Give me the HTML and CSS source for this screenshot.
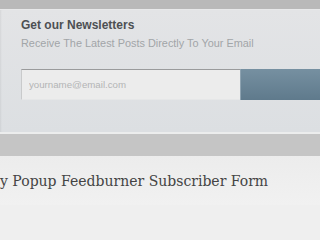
FILE: index.html
```html
<!DOCTYPE html>
<html lang="en">
<head>
<meta charset="utf-8">
<title>Newsletter popup</title>
<link rel="stylesheet" href="styles.css">
</head>
<body>
<div class="topbar"></div>
<section class="panel">
  <h2 class="title">Get our Newsletters</h2>
  <p class="subtitle">Receive The Latest Posts Directly To Your Email</p>
  <form class="form">
    <input class="email" type="text" placeholder="yourname@email.com">
    <button class="submit" type="button" aria-label="Subscribe"></button>
  </form>
</section>
<div class="band"></div>
<div class="caption">
  <p class="caption-text">y Popup Feedburner Subscriber Form</p>
</div>
</body>
</html>
```

FILE: styles.css
```css
html, body {
  margin: 0;
  padding: 0;
  overflow: hidden;
  background: #efefef;
}

.topbar {
  height: 9px;
  background: #b9b9b9;
}

.panel {
  height: 122px;
  border-top: 1px solid #e8e9ea;
  border-bottom: 2px solid #eceded;
  background: linear-gradient(to bottom, #e3e4e6 0%, #dcdfe2 100%);
  padding-left: 21px;
  overflow: hidden;
  display: flex;
  flex-direction: column;
  box-shadow: inset 2px 0 2px -1px rgba(0,0,0,0.06);
}

.title {
  margin: 8px 0 0;
  font-family: "Liberation Sans", Arial, sans-serif;
  font-weight: bold;
  font-size: 12px;
  line-height: 14px;
  color: #4d5053;
  white-space: nowrap;
}

.subtitle {
  margin: 5px 0 0;
  font-family: "Liberation Sans", Arial, sans-serif;
  font-size: 10.9px;
  line-height: 13px;
  color: #a2a5a8;
  white-space: nowrap;
}

.form {
  margin: 19px 0 0;
  display: flex;
  height: 31px;
}

.email {
  flex: none;
  box-sizing: border-box;
  width: 219px;
  height: 31px;
  margin: 0;
  padding: 0 0 0 7px;
  border: none;
  border-top: 1px solid #9a9b9c;
  border-left: 1px solid #c9cacb;
  border-bottom: 1px solid #e6e7e8;
  background: #ececec;
  font-family: "Liberation Sans", Arial, sans-serif;
  font-size: 9.7px;
  color: #555;
  outline: none;
}

.email::placeholder {
  color: #b3b4b5;
}

.submit {
  flex: none;
  width: 90px;
  height: 31px;
  margin: 0;
  padding: 0;
  border: none;
  border-left: 1px solid #8ea3b1;
  background: linear-gradient(to bottom, #7690a1 0%, #5f7a8c 100%);
}

.band {
  height: 22px;
  background: #c5c5c5;
}

.caption {
  box-sizing: border-box;
  padding-top: 17px;
  background: linear-gradient(to bottom, #ececec, #f1f1f1);
  height: 49px;
}

.caption-text {
  margin: 0;
  font-family: "DejaVu Serif", Georgia, serif;
  font-size: 14px;
  line-height: 16px;
  color: #444444;
  white-space: nowrap;
}
```
